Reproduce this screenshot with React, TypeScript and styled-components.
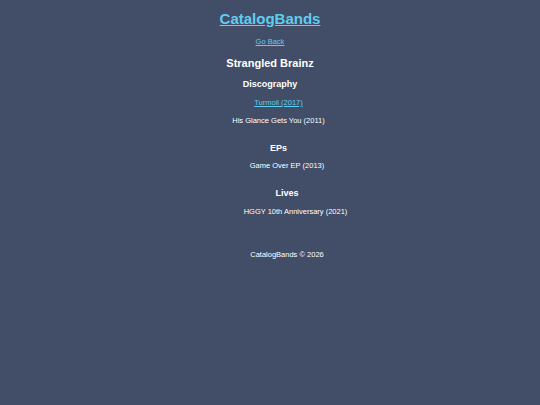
import React from 'react';
import styled, { createGlobalStyle } from 'styled-components';

const GlobalStyle = createGlobalStyle`
  html, body {
    margin: 0;
    padding: 0;
    background: #424d67;
  }
  body {
    font-family: "Liberation Sans", Arial, sans-serif;
    color: #ffffff;
  }
`;

const Page = styled.div`
  min-height: 405px;
  background: #424d67;
  text-align: center;
  overflow: hidden;
`;

const Title = styled.h1`
  margin: 9px 0 0;
  font-size: 15px;
  line-height: 20px;
  font-weight: bold;

  a {
    color: #5fcdf0;
  }
`;

const BackLink = styled.a`
  display: block;
  margin-top: 8px;
  font-size: 7.5px;
  line-height: 10px;
  color: #5fcdf0;
`;

const BandName = styled.h2`
  margin: 9px 0 0;
  font-size: 11px;
  line-height: 14px;
  font-weight: bold;
`;

const SectionTitle = styled.h3<{ $gap: number }>`
  margin: ${({ $gap }) => $gap}px 0 0;
  font-size: 9px;
  line-height: 12px;
  font-weight: bold;
`;

const Nest = styled.div`
  padding-left: 17px;
`;

const Item = styled.div<{ $gap?: number }>`
  margin-top: ${({ $gap = 8 }) => $gap}px;
  font-size: 7.5px;
  line-height: 10px;

  a {
    color: #5fcdf0;
  }
`;

const Footer = styled.footer`
  margin-top: 33px;
  font-size: 7.5px;
  line-height: 10px;
`;

const App: React.FC = () => {
  return (
    <Page>
      <GlobalStyle />
      <Title>
        <a href="#">CatalogBands</a>
      </Title>
      <BackLink href="#">Go Back</BackLink>
      <BandName>Strangled Brainz</BandName>
      <SectionTitle $gap={8}>Discography</SectionTitle>
      <Nest>
        <Item>
          <a href="#">Turmoil (2017)</a>
        </Item>
        <Item>His Glance Gets You (2011)</Item>
        <SectionTitle $gap={16}>EPs</SectionTitle>
        <Nest>
          <Item $gap={7}>Game Over EP (2013)</Item>
          <SectionTitle $gap={16}>Lives</SectionTitle>
          <Nest>
            <Item>HGGY 10th Anniversary (2021)</Item>
          </Nest>
          <Footer>CatalogBands © 2026</Footer>
        </Nest>
      </Nest>
    </Page>
  );
};

export default App;
